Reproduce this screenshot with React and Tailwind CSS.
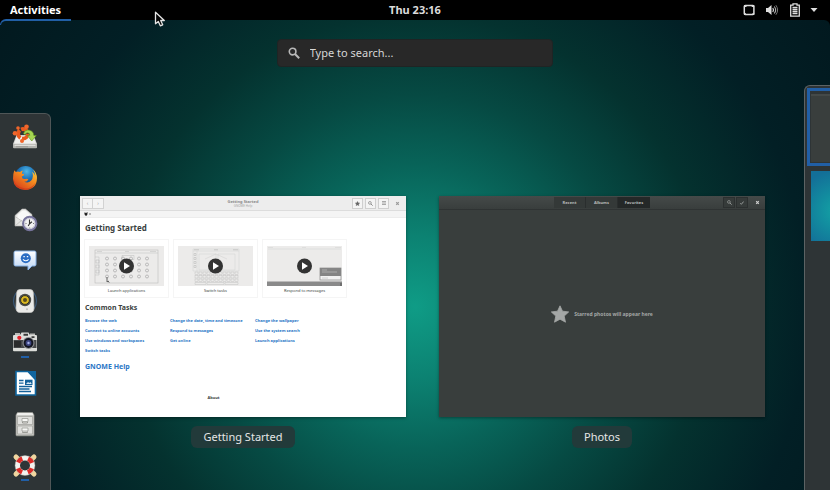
const dockApps = [
  { name: "Install Ubuntu GNOME", icon: InstallerIcon },
  { name: "Firefox", icon: FirefoxIcon },
  { name: "Evolution", icon: MailIcon },
  { name: "Empathy", icon: ChatIcon },
  { name: "Rhythmbox", icon: SpeakerIcon },
  { name: "Photos", icon: CameraIcon, running: true },
  { name: "LibreOffice Writer", icon: WriterIcon },
  { name: "Files", icon: CabinetIcon },
  { name: "Help", icon: LifebuoyIcon, running: true },
];

const taskColumns = [
  ["Browse the web", "Connect to online accounts", "Use windows and workspaces", "Switch tasks"],
  ["Change the date, time and timezone", "Respond to messages", "Get online"],
  ["Change the wallpaper", "Use the system search", "Launch applications"],
];

export default function App() {
  return (
    <div className="h-screen flex flex-col overflow-hidden bg-black font-['Noto_Sans','Open_Sans',sans-serif]">
      <TopBar />
      <main className="relative flex-1 min-h-0 flex flex-col rounded-t-md bg-[radial-gradient(circle_at_50%_61%,#0f9c86_0%,#0c8272_14%,#086459_28%,#064a43_42%,#04322f_58%,#021f25_78%,#02191f_100%)]">
        <span className="absolute -top-px left-0 h-1.5 w-[71px] rounded-tl-md border-t-2 border-l border-[#215fa6]" />
        <div className="flex justify-center pt-[19px] pb-[18px]">
          <SearchBox />
        </div>
        <div className="flex-1 min-h-0 flex">
          <Dock />
          <div className="flex-1 flex gap-[33px] pt-[111px] pl-[29px] pr-[39px]">
            <WindowPreview title="Getting Started">
              <HelpWindow />
            </WindowPreview>
            <WindowPreview title="Photos">
              <PhotosWindow />
            </WindowPreview>
          </div>
          <Workspaces />
        </div>
      </main>
      <svg className="absolute left-[154px] top-[11px] w-3 h-4" viewBox="0 0 12 16" aria-hidden="true">
        <path d="M1.500 1.200v11.600l2.800-2.400 2 4.400 2.400-1-2-4.300h3.600z" fill="#050505" stroke="#e4e4e4" strokeWidth="1.300" strokeLinejoin="round" />
      </svg>
    </div>
  );
}

function TopBar() {
  return (
    <header className="h-5 shrink-0 grid grid-cols-3 bg-black text-[11px] leading-5 font-bold text-[#dcdcdc]">
      <div>
        <button className="block h-5 px-[10px] text-white">Activities</button>
      </div>
      <button className="justify-self-center h-5">Thu 23:16</button>
      <button className="justify-self-end h-5 flex items-center pr-3 gap-[9px]" aria-label="System menu">
        <svg className="w-3 h-3" viewBox="0 0 12 12">
          <rect x="1.3" y="1.5" width="9.6" height="9" rx="1" fill="none" stroke="#dedede" strokeWidth="1.5" />
          <path d="M1 1h2.500v2H1zM8.700 1h2.500v2H8.700zM1 9.300h2v1.700H1zM9.300 9.300h2v1.700h-2z" fill="#dedede" />
        </svg>
        <svg className="w-4 h-3" viewBox="0 0 16 12">
          <path d="M2 4h2l3.500-3v10L4 8H2z" fill="#dedede" />
          <path d="M8.800 4q1.400 2 0 4" fill="none" stroke="#dedede" strokeWidth="1.200" />
          <path d="M10.300 2.500q2.700 3.500 0 7" fill="none" stroke="#b0b0b0" strokeWidth="1.100" />
          <path d="M11.900 1.200q3.400 4.800 0 9.600" fill="none" stroke="#777" strokeWidth="1" />
        </svg>
        <svg className="w-3 h-3.5" viewBox="0 0 12 14">
          <path d="M4 2.200V.8h4v1.400h2.300v11H1.700v-11z" fill="none" stroke="#dedede" strokeWidth="1.300" />
          <path d="M3.500 4.500h5M3.500 6.500h5M3.500 8.500h5M3.500 10.500h5" stroke="#dedede" strokeWidth="1.300" />
        </svg>
        <svg className="w-2 h-1" viewBox="0 0 8 4">
          <path d="M.5 0h7L4 4z" fill="#dedede" />
        </svg>
      </button>
    </header>
  );
}

function SearchBox() {
  return (
    <label className="w-1/3 h-7 flex items-center gap-[10px] px-[10px] rounded-[4px] border border-[#1f2424] bg-[#282828]">
      <SearchGlyph className="w-3 h-3 shrink-0 text-[#b8b8b8]" />
      <input
        type="text"
        aria-label="Search"
        placeholder="Type to search..."
        className="flex-1 min-w-0 bg-transparent outline-none text-[11px] leading-4 text-[#dcdcdc] placeholder:text-[#d6d6d6]"
      />
    </label>
  );
}

function Dock() {
  return (
    <nav className="w-[51px] shrink-0 mt-7 pt-0.5 rounded-tr-md border-t border-r border-[#4f5657] bg-[#2e3436]">
      {dockApps.map(({ name, icon: Icon, running }) => (
        <button key={name} aria-label={name} className="relative w-full h-[41px] flex items-center justify-center">
          <Icon />
          {running && <span className="absolute bottom-1 w-2 h-0.5 bg-[#215fa6]" />}
        </button>
      ))}
    </nav>
  );
}

function Workspaces() {
  return (
    <aside className="w-[26px] shrink-0 pt-0.5 pl-0.5 overflow-hidden rounded-tl-md border-t border-l border-[#5c6364] bg-[#2e3436]">
      <button aria-label="Workspace 1" className="block w-full h-[78px] border-3 border-r-0 border-[#215fa6] bg-[#2e3436] pl-px pt-0.5">
        <span className="block h-[68px] border-t-2 border-[#444948] bg-[#393e3d]" />
      </button>
      <button aria-label="Workspace 2" className="block w-[120px] h-[70px] mt-[5px] ml-1 bg-[radial-gradient(circle_at_26px_40px,#14a3a5_0%,#128c9f_18%,#136f98_40%)]" />
    </aside>
  );
}

function WindowPreview({ title, children }) {
  return (
    <figure className="flex-1 min-w-0 flex flex-col items-center gap-[9px]">
      <div className="w-full h-[221px] shadow-[0_1px_3px_rgba(0,0,0,0.4)]">{children}</div>
      <figcaption className="h-[22px] px-3 rounded-md bg-[#223a3a] text-[11px] leading-[22px] text-[#e6e6e6]">{title}</figcaption>
    </figure>
  );
}

function HelpWindow() {
  return (
    <section className="h-full flex flex-col bg-white text-[#3a3f40]">
      <div className="h-[15px] shrink-0 px-0.5 flex items-center justify-between bg-[#ededed] border-b border-[#dcdcdc]">
        <div className="w-[52px] flex">
          <button aria-label="Back" className="w-[11px] h-[11px] border border-[#d2d2d2] bg-[#f4f4f4] text-[5px] leading-[8px] text-[#999]">‹</button>
          <button aria-label="Forward" className="w-[11px] h-[11px] border border-l-0 border-[#d2d2d2] bg-[#f4f4f4] text-[5px] leading-[8px] text-[#999]">›</button>
        </div>
        <div className="text-center">
          <div className="text-[4px] leading-[5px] font-bold text-[#8b8b8b]">Getting Started</div>
          <div className="text-[3px] leading-[4px] text-[#a5a5a5]">GNOME Help</div>
        </div>
        <div className="w-[52px] flex items-center gap-0.5">
          <button aria-label="Bookmark" className="w-[11px] h-[11px] flex items-center justify-center border border-[#cfcfcf] bg-[#f4f4f4] text-[#666]">
            <StarGlyph className="w-[5px] h-[5px]" />
          </button>
          <button aria-label="Search help" className="w-[11px] h-[11px] flex items-center justify-center border border-[#cfcfcf] bg-[#f4f4f4] text-[#777]">
            <SearchGlyph className="w-[5px] h-[5px]" />
          </button>
          <button aria-label="Menu" className="w-[11px] h-[11px] flex items-center justify-center border border-[#cfcfcf] bg-[#f4f4f4]">
            <svg className="w-1 h-1" viewBox="0 0 4 4"><path d="M0 .5h4M0 2h4M0 3.500h4" stroke="#888" strokeWidth=".7" /></svg>
          </button>
          <button aria-label="Close" className="ml-1">
            <CrossGlyph className="w-[5px] h-[5px] text-[#9a9a9a]" />
          </button>
        </div>
      </div>
      <div className="h-[7px] shrink-0 flex items-center pl-1 bg-[#f4f4f4] border-b border-[#ececec]">
        <svg className="w-2 h-1" viewBox="0 0 8 4">
          <path d="M.3.800Q.5.300 1.200.500L2 1.200 3 .200h.6L3.300 2.800Q3 4 1.700 3.800.500 3.500.3.800z" fill="#222" />
          <path d="M5 2h2" stroke="#777" />
        </svg>
      </div>
      <div className="flex-1 w-[267px] pl-[5px] pt-[5px]">
        <h1 className="text-[8px] leading-[10px] font-bold">Getting Started</h1>
        <div className="grid grid-cols-3 gap-1 mt-1.5 -ml-px">
          <VideoCard caption="Launch applications">
            <LaunchDrawing />
          </VideoCard>
          <VideoCard caption="Switch tasks">
            <SwitchDrawing />
          </VideoCard>
          <VideoCard caption="Respond to messages">
            <MessageDrawing />
          </VideoCard>
        </div>
        <h2 className="mt-[5px] text-[7px] leading-[10px] font-bold">Common Tasks</h2>
        <div className="grid grid-cols-3 mt-[3px] mr-[7px] text-[4px] leading-[10px] font-bold text-[#2a76c6]">
          {taskColumns.map((tasks) => (
            <ul key={tasks[0]}>
              {tasks.map((task) => (
                <li key={task} className="h-[10px] whitespace-nowrap">
                  <a href="#" className="block">{task}</a>
                </li>
              ))}
            </ul>
          ))}
        </div>
        <h2 className="mt-1.5 text-[7px] leading-[10px] font-bold text-[#2a76c6]">
          <a href="#" className="block">GNOME Help</a>
        </h2>
        <p className="mt-[21px] mr-[5px] text-center text-[4px] leading-[10px] font-bold">About</p>
      </div>
    </section>
  );
}

function VideoCard({ caption, children }) {
  return (
    <button className="block h-[59px] px-1 pt-[5px] border border-[#f5f5f5] text-center">
      <svg className="w-full h-10" viewBox="0 0 75 40" preserveAspectRatio="none">
        <rect width="75" height="40" fill="#ecebea" />
        {children}
        <circle cx="37.500" cy="20" r="7.500" fill="#333" />
        <path d="M35 16.200v7.600l6-3.800z" fill="#fff" />
      </svg>
      <span className="block text-[4px] leading-[10px]">{caption}</span>
    </button>
  );
}

function LaunchDrawing() {
  return (
    <g fill="none" stroke="#b4b4b4" strokeWidth=".5">
      <rect x="6" y="4" width="63" height="33" />
      <path d="M6 7h63M8 5.500h5M36 5.500h4M61 5.500h6M33 9.500h12v4H33zM6 11h4v18H6" stroke="#bdbdbd" />
      {[12.500, 18.500, 24.500, 30.500].map((y) =>
        [18, 26, 34, 42, 50, 58].map((x) => <circle key={`${x}-${y}`} cx={x} cy={y} r="1.500" stroke="#8d8d8d" />)
      )}
      <path d="M7 14h3v3H7zM7 19h3v3H7zM7 24h3v3H7z" />
      <path d="M18 31v5l1.200-1 1 1.600" stroke="#555" strokeWidth=".9" />
    </g>
  );
}

function SwitchDrawing() {
  return (
    <g fill="none" stroke="#cacaca" strokeWidth=".4">
      <path d="M15 3h46v22H15zM15 5h46M19 5v20M21 8h17v16H21zM40 8h17v16H40zM27 13l11-5 11 5" />
      <path d="M16 3.800h5M36 3.800h4M55 3.800h5" stroke="#999" />
      <path d="M16 7.500h2v2h-2zM16 11.500h2v2h-2zM16 15.500h2v2h-2zM16 19.500h2v2h-2z" stroke="#aaa" />
      <g stroke="#b8b8b8">
        {[26, 29.500, 33].map((y) =>
          [17, 21, 25, 29, 33, 37, 41, 45, 49, 53, 57].map((x) => (
            <rect key={`${x}-${y}`} x={x} y={y} width="3" height="2.500" />
          ))
        )}
        <path d="M17 36.500h11v2H17zM29 36.500h17v2H29zM47 36.500h13v2H47z" />
      </g>
    </g>
  );
}

function MessageDrawing() {
  return (
    <g>
      <path d="M1 1.500h5M35 1.500h4M68 1.500h6M1 3h73" stroke="#d0d0d0" strokeWidth=".5" />
      <rect y="35.500" width="75" height="4.500" fill="#8a8a8a" />
      <rect x="53" y="22" width="21" height="12" fill="#f2f2f2" stroke="#888" strokeWidth=".7" />
      <rect x="53" y="22" width="21" height="8" fill="#858585" />
      <path d="M55 24h5M55 26h15" stroke="#b5b5b5" strokeWidth=".8" />
      <path d="M55 32h6" stroke="#c9c9c9" strokeWidth=".8" />
      <path d="M74 37v4" stroke="#555" />
    </g>
  );
}

function PhotosWindow() {
  return (
    <section className="h-full flex flex-col bg-[#393e3d] text-[#a4a7a6]">
      <div className="h-[14px] shrink-0 grid grid-cols-[1fr_auto_1fr] items-center bg-linear-to-b from-[#454a49] to-[#393e3d] border-b border-[#2f3333]">
        <div className="col-start-2 flex text-[4px] leading-[10px] font-bold text-center text-[#b8bab9]">
          <button className="w-8 h-[11px] border-r border-[#2a2e2e] bg-[#343938]">Recent</button>
          <button className="w-8 h-[11px] border-r border-[#2a2e2e] bg-[#343938]">Albums</button>
          <button className="w-8 h-[11px] bg-[#242828]">Favorites</button>
        </div>
        <div className="justify-self-end flex items-center gap-px pr-[5px]">
          <button aria-label="Search photos" className="w-3 h-[11px] flex items-center justify-center border border-[#2c3030] bg-[#363b3a]">
            <SearchGlyph className="w-[5px] h-[5px]" />
          </button>
          <button aria-label="Select" className="w-3 h-[11px] flex items-center justify-center border border-[#2c3030] bg-[#363b3a]">
            <svg className="w-1 h-1" viewBox="0 0 4 4"><path d="M.3 2.300l1 1L3.700.500" fill="none" stroke="currentColor" strokeWidth=".9" /></svg>
          </button>
          <button aria-label="Close" className="ml-1.5">
            <CrossGlyph className="w-[5px] h-[5px] text-[#d0d0d0]" />
          </button>
        </div>
      </div>
      <div className="flex-1 flex items-center justify-center gap-[5px] text-[5px] leading-[8px] font-bold">
        <StarGlyph className="w-[18px] h-[18px]" />
        <p>Starred photos will appear here</p>
      </div>
    </section>
  );
}

function SearchGlyph({ className }) {
  return (
    <svg className={className} viewBox="0 0 12 12" fill="none" stroke="currentColor">
      <circle cx="4.600" cy="4.600" r="3.300" strokeWidth="1.600" />
      <path d="M7 7l4.200 4.200" strokeWidth="2" />
    </svg>
  );
}

function StarGlyph({ className }) {
  return (
    <svg className={className} viewBox="0 0 18 18" fill="currentColor" stroke="currentColor" strokeWidth=".8" strokeLinejoin="round">
      <path d="M9 .8l2.500 5.400 6.200.7-4.500 4.200 1.300 6.100L9 14.200l-5.500 3 1.300-6.100L.3 6.900l6.200-.7z" />
    </svg>
  );
}

function CrossGlyph({ className }) {
  return (
    <svg className={className} viewBox="0 0 5 5">
      <path d="M1.200 1.200l2.600 2.600M3.800 1.200L1.200 3.800" stroke="currentColor" strokeWidth="1.200" />
    </svg>
  );
}

function InstallerIcon() {
  return (
    <svg className="w-[26px] h-[26px]" viewBox="0 0 26 26">
      <path d="M4.500 11h17L25 20v1H1v-1z" fill="#d4d4d2" />
      <path d="M5 12l-2.800 7.500h21.600L21 12z" fill="#f0f0ee" />
      <path d="M1 20h24v3.500q0 .8-1 .8H2q-1 0-1-.8z" fill="#b4b5b1" />
      <path d="M2.500 21.300h21" stroke="#e9e9e7" strokeWidth="1" />
      <path d="M4 22.800h12" stroke="#8f908c" strokeWidth=".8" />
      <circle cx="11" cy="9.800" r="4.800" fill="none" stroke="#ea5a1f" strokeWidth="3.800" strokeDasharray="8.500 1.550" />
      <g fill="#f0662b">
        <circle cx="3" cy="9.200" r="2.300" />
        <circle cx="14.500" cy="2.800" r="2.300" />
        <circle cx="6" cy="4" r="1.800" />
        <circle cx="10" cy="17" r="2" />
      </g>
      <path d="M11.500 9.500q1.500-4 6-3.300 4.200 1 4.200 5.300h2.600l-4.500 5.500-4.500-5.500h2.500q0-2.500-2.100-2.700-2-.1-2.500 2z" fill="#a5d552" stroke="#5d8f1d" strokeWidth=".6" />
    </svg>
  );
}

function FirefoxIcon() {
  return (
    <svg className="w-[26px] h-[26px]" viewBox="0 0 26 26">
      <defs>
        <radialGradient id="globe" cx="55%" cy="25%" r="70%">
          <stop offset="0" stopColor="#4fb7e6" />
          <stop offset=".5" stopColor="#1c72b8" />
          <stop offset="1" stopColor="#0c3474" />
        </radialGradient>
        <linearGradient id="fox" x1="1" y1="0" x2=".2" y2="1">
          <stop offset="0" stopColor="#ffd83d" />
          <stop offset=".45" stopColor="#f58a1f" />
          <stop offset="1" stopColor="#d53a1c" />
        </linearGradient>
      </defs>
      <circle cx="13.500" cy="11.800" r="10.800" fill="url(#globe)" />
      <path d="M2.300 5.200q.7 1.300 1.800 1.700Q6 6 8 7q1.700-1.500 3-1.200-1.500 1.500-1 3 2 .2 2.200 1-.5 1.300-2.400 1.700.2 3 3.600 2.500 1.800-.4 3 .3-1.200 2.700-4.200 2.500 4 2 7-1.200 3-4 .8-8.800 2.400 1.500 3.200 4-.2-3.800-2.200-6.300 4 3.200 4 8.800Q24.600 24.500 13 25 1.800 24.200 1 14q-.2-4.800 1.300-8.800z" fill="url(#fox)" />
      <path d="M1.200 13Q3 22.500 13 23.500q7 0 10.500-6Q21 24.800 13 25 2.200 24.200 1.200 13z" fill="#c9341b" opacity=".6" />
    </svg>
  );
}

function MailIcon() {
  return (
    <svg className="w-[26px] h-[26px]" viewBox="0 0 26 26">
      <path d="M3 9.500L10 3h3.500L20 8.500V20H3z" fill="#e4e4e2" stroke="#b4b4b2" strokeWidth=".6" />
      <path d="M5.500 9L10.500 4.500h3L18.500 9v5l-6 2-7-3z" fill="#f8f8f8" />
      <path d="M3 10.500l7.500 5M3 20l7-6" fill="none" stroke="#bcbcba" strokeWidth=".8" />
      <circle cx="17.700" cy="17.500" r="6.700" fill="#e6e6ec" stroke="#77749c" strokeWidth="2" />
      <circle cx="17.700" cy="17.500" r="5.100" fill="#f2f2f2" stroke="#b7b5c8" strokeWidth=".6" />
      <path d="M17.500 13.500v4.300l2.500-2M17.500 17.800l-1.300 2.200" fill="none" stroke="#333" strokeWidth="1.100" />
      <path d="M13.500 17.500h1M21 17.500h1M17.700 21.500v.8" stroke="#777" />
    </svg>
  );
}

function ChatIcon() {
  return (
    <svg className="w-[26px] h-[26px]" viewBox="0 0 26 26">
      <defs>
        <linearGradient id="bubble" x1="0" y1="0" x2="0" y2="1">
          <stop offset="0" stopColor="#fff" />
          <stop offset="1" stopColor="#bcd5f5" />
        </linearGradient>
      </defs>
      <path d="M3.500 4h19q1.500 0 1.500 1.500v12q0 1.500-1.500 1.500H20l-4 4v-4H3.500Q2 19 2 17.500v-12Q2 4 3.500 4z" fill="url(#bubble)" stroke="#83aee3" />
      <circle cx="13.800" cy="11.300" r="5" fill="#2c6ec4" />
      <path d="M11 12.300q2.800 3 5.600 0" fill="none" stroke="#fff" strokeWidth="1.100" />
      <path d="M11.400 9.600h1.400M14.800 9.600h1.400" stroke="#fff" strokeWidth="1.100" />
    </svg>
  );
}

function SpeakerIcon() {
  return (
    <svg className="w-[26px] h-[26px]" viewBox="0 0 26 26">
      <path d="M4 5q-5 8 0 16M22 5q5 8 0 16" fill="none" stroke="#3a5878" strokeWidth="1.200" />
      <path d="M8 1.500h10q3 0 3.300 3L22 20q0 4.500-4 4.500H8q-4 0-4-4.500L4.700 4.500q.3-3 3.300-3z" fill="#eaeae8" stroke="#c8c8c6" strokeWidth=".7" />
      <circle cx="13" cy="12" r="6.200" fill="#4b4d49" />
      <circle cx="13" cy="12" r="4.400" fill="#dbb921" stroke="#222" strokeWidth=".8" />
      <circle cx="13" cy="12" r="2" fill="#574c1d" />
      <circle cx="15" cy="21.300" r="1" fill="#bebebc" />
    </svg>
  );
}

function CameraIcon() {
  return (
    <svg className="w-[26px] h-[26px]" viewBox="0 0 26 26">
      <path d="M3 4h5v3H3zM18 4.500h5v2.500h-5z" fill="#b9bab7" />
      <path d="M2 6h6l1.500-2.500h7L18 6h6q1 0 1 1.200v14q0 1-1 1H2q-1 0-1-1v-14Q1 6 2 6z" fill="#dcddda" />
      <path d="M1.500 11h23v8h-23z" fill="#46484a" />
      <path d="M2 12h7v6H2z" fill="#2a2b2c" />
      <path d="M11.500 4.800h4.500v2h-4.500zM19.500 7.300h3v1.700h-3z" fill="#3a3b3b" />
      <circle cx="7.300" cy="8.800" r="2.100" fill="#e2222b" />
      <circle cx="16.500" cy="14" r="6" fill="#8b8e90" />
      <circle cx="16.500" cy="14" r="4.900" fill="#121420" />
      <circle cx="16.500" cy="14" r="2.900" fill="#3c447e" />
      <circle cx="16.500" cy="14" r="1.200" fill="#a5b0e8" />
    </svg>
  );
}

function WriterIcon() {
  return (
    <svg className="w-[26px] h-[26px]" viewBox="0 0 26 26">
      <path d="M4 1.500h12l7.500 8V25H4z" fill="#fff" stroke="#0f659f" strokeWidth="1.600" />
      <path d="M15.500 1H24v9h-.8z" fill="#11659f" />
      <path d="M7 10.500h4.500M7 13.200h4.500M7 16.500h13M7 19h10.500M7 21.500h12" stroke="#15629a" strokeWidth="1.300" />
      <path d="M13 9.700h7.500V15H13z" fill="#15629a" />
      <path d="M14 14l2-2 1.300 1 1-1 1.500 2z" fill="#d6e8f5" />
    </svg>
  );
}

function CabinetIcon() {
  return (
    <svg className="w-[26px] h-[26px]" viewBox="0 0 26 26">
      <path d="M5.500 1.500h15l1.500 2.500v20q0 .8-.8.8H4.800q-.8 0-.8-.8V4z" fill="#c9cac6" stroke="#989994" strokeWidth=".7" />
      <path d="M5.700 2h14.600l1 2H4.700z" fill="#f0f0ee" />
      <path d="M5.500 5.500h15v8h-15zM5.500 15h15v8h-15z" fill="#e0e0dd" stroke="#a0a19c" strokeWidth=".7" />
      <path d="M10 7.500h6v3h-6zM10 17h6v3h-6z" fill="#f7f7f5" stroke="#94958f" strokeWidth=".7" />
      <path d="M10.500 11v1h5v-1M10.500 20.500v1h5v-1" fill="none" stroke="#888983" strokeWidth=".8" />
    </svg>
  );
}

function LifebuoyIcon() {
  return (
    <svg className="w-[26px] h-[26px]" viewBox="0 0 26 26">
      <path d="M4 5l3 3M22 5l-3 3M4 22l3-3M22 22l-3-3" stroke="#f0d6a0" strokeWidth="5" strokeLinecap="round" />
      <circle cx="13" cy="13.500" r="7.500" fill="none" stroke="#f3f2ef" strokeWidth="5" />
      <circle cx="13" cy="13.500" r="7.500" fill="none" stroke="#dc2a27" strokeWidth="4.600" strokeDasharray="5.780 6.001" transform="rotate(23 13 13.500)" />
      <circle cx="13" cy="13.500" r="10" fill="none" stroke="#a9a49c" strokeWidth=".4" />
    </svg>
  );
}
